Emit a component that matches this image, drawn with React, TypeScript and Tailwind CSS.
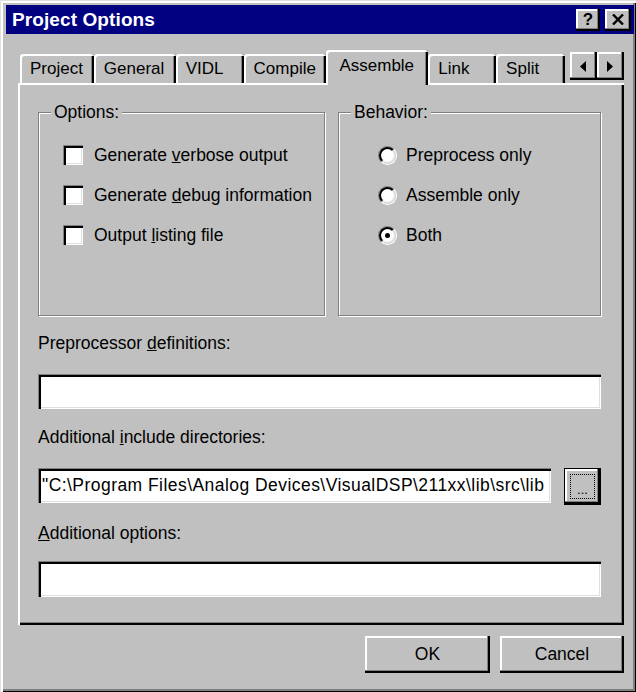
import React from "react";

// classic 3D bevels
const raised =
  "bg-[#c0c0c0] shadow-[inset_-2px_-2px_#000,inset_-3px_-3px_#808080,inset_2px_2px_#fff]";
const sunken =
  "bg-white shadow-[inset_1px_1px_#808080,inset_3px_3px_#000,inset_-1px_-1px_#fff,inset_-2px_-2px_#dfdfdf]";

const tabs = [
  { label: "Project", w: "w-[74px]" },
  { label: "General", w: "w-[82px]" },
  { label: "VIDL", w: "w-[68px]" },
  { label: "Compile", w: "w-[83px]" },
  { label: "Assemble", w: "w-[102px]", active: true },
  { label: "Link", w: "w-[68px]" },
  { label: "Split", w: "w-[69px]" },
];

function Checkbox({ children }: { children: React.ReactNode }) {
  return (
    <div className="flex items-center h-[20px] gap-[11px]">
      <span className={`w-[20px] h-[20px] shrink-0 ${sunken}`} />
      <span>{children}</span>
    </div>
  );
}

function Radio({ checked, children }: { checked?: boolean; children: React.ReactNode }) {
  return (
    <div className="flex items-center h-[20px] gap-[9px]">
      <span className="w-[19px] h-[19px] shrink-0 rounded-full border border-t-[#808080] border-l-[#808080] border-r-white border-b-white">
        <span className="w-full h-full rounded-full border-2 border-t-black border-l-black border-r-[#dfdfdf] border-b-[#dfdfdf] bg-white flex items-center justify-center">
          {checked && <span className="w-[5px] h-[5px] rounded-full bg-black" />}
        </span>
      </span>
      <span>{children}</span>
    </div>
  );
}

function GroupBox({
  title,
  className,
  children,
}: {
  title: string;
  className: string;
  children: React.ReactNode;
}) {
  return (
    <div
      className={`relative h-[204px] border border-[#808080] shadow-[1px_1px_0_#fff,inset_1px_1px_0_#fff] ${className}`}
    >
      <span className="absolute -top-[11px] left-[12px] bg-[#c0c0c0] px-[3px] leading-[20px]">
        {title}
      </span>
      {children}
    </div>
  );
}

export default function App() {
  return (
    <div className="w-[636px] h-[692px] bg-[#c0c0c0] pt-[5px] pl-[6px] pr-[2px] text-black font-['Liberation_Sans',Arial,sans-serif] text-[17.5px] shadow-[inset_1px_1px_#dfdfdf,inset_3px_3px_#fff,inset_-1px_-1px_#000,inset_-3px_-3px_#808080] select-none">
      {/* Title bar */}
      <div className="h-[29px] bg-[#000080] flex items-center justify-between pl-[6px] pr-[3px]">
        <span className="text-white font-bold text-[19px] leading-none tracking-[0.1px]">
          Project Options
        </span>
        <div className="flex gap-[5px]">
          <div className={`w-[24px] h-[22px] flex items-center justify-center font-bold text-[17px] leading-none ${raised}`}>
            ?
          </div>
          <div className={`w-[26px] h-[22px] flex items-center justify-center ${raised}`}>
            <svg width="12" height="11" viewBox="0 0 12 11">
              <path d="M1 0.5 L11 10.5 M11 0.5 L1 10.5" stroke="#000" strokeWidth="2.4" />
            </svg>
          </div>
        </div>
      </div>

      <div className="pl-[12px] pr-[10px] pt-[16px]">
        {/* Tab strip */}
        <div className="h-[33px] flex items-end pl-[2px]">
          {tabs.map((t) =>
            t.active ? (
              <div
                key={t.label}
                className={`${t.w} h-[35px] -mb-[2px] relative z-10 bg-[#c0c0c0] rounded-t-[3px] pl-[13px] pt-[4px] leading-[24px] text-[17px] shadow-[inset_2px_2px_#fff,inset_-2px_0_#000,inset_-3px_0_#808080]`}
              >
                {t.label}
              </div>
            ) : (
              <div
                key={t.label}
                className={`${t.w} h-[29px] rounded-t-[3px] pl-[10px] pt-[3px] leading-[24px] text-[17px] shadow-[inset_2px_2px_#fff,inset_-2px_0_#000,inset_-3px_0_#808080]`}
              >
                {t.label}
              </div>
            )
          )}
          <div className="self-start mt-[2px] ml-[5px] flex">
            <div className={`w-[27px] h-[28px] flex items-center justify-center ${raised}`}>
              <svg width="6" height="11" viewBox="0 0 6 11">
                <path d="M6 0 L0 5.5 L6 11 Z" fill="#000" />
              </svg>
            </div>
            <div className={`w-[27px] h-[28px] flex items-center justify-center ${raised}`}>
              <svg width="6" height="11" viewBox="0 0 6 11">
                <path d="M0 0 L6 5.5 L0 11 Z" fill="#000" />
              </svg>
            </div>
          </div>
        </div>

        {/* Tab page */}
        <div className="w-[606px] h-[542px] pl-[20px] pr-[23px] pt-[29px] shadow-[inset_2px_2px_#fff,inset_-2px_-2px_#000,inset_-3px_-3px_#808080]">
          <div className="flex gap-[13px]">
            <GroupBox title="Options:" className="w-[287px]">
              <div className="pt-[32px] pl-[24px] flex flex-col gap-[20px]">
                <Checkbox>
                  Generate <span className="underline">v</span>erbose output
                </Checkbox>
                <Checkbox>
                  Generate <span className="underline">d</span>ebug information
                </Checkbox>
                <Checkbox>
                  Output <span className="underline">l</span>isting file
                </Checkbox>
              </div>
            </GroupBox>
            <GroupBox title="Behavior:" className="w-[263px]">
              <div className="pt-[32px] pl-[39px] flex flex-col gap-[20px]">
                <Radio>Preprocess only</Radio>
                <Radio>Assemble only</Radio>
                <Radio checked>Both</Radio>
              </div>
            </GroupBox>
          </div>

          <div className="mt-[17px] leading-[20px]">
            Preprocessor <span className="underline">d</span>efinitions:
          </div>
          <div className={`mt-[21px] h-[35px] ${sunken}`} />

          <div className="mt-[18px] leading-[20px]">
            Additional <span className="underline">i</span>nclude directories:
          </div>
          <div className="mt-[21px] flex items-start gap-[13px]">
            <div className={`flex-1 h-[35px] overflow-hidden whitespace-nowrap pl-[4px] leading-[35px] tracking-[0.45px] ${sunken}`}>
              "C:\Program Files\Analog Devices\VisualDSP\211xx\lib\src\lib
            </div>
            <div className="w-[37px] h-[37px] border border-black">
              <div className={`w-full h-full p-[5px] ${raised}`}>
                <div className="w-full h-full border border-dotted border-black flex items-end justify-center text-[13px] leading-[14px] pb-[1px]">
                  ...
                </div>
              </div>
            </div>
          </div>

          <div className="mt-[18px] leading-[20px]">
            <span className="underline">A</span>dditional options:
          </div>
          <div className={`mt-[18px] h-[36px] ${sunken}`} />
        </div>

        {/* Dialog buttons */}
        <div className="mt-[11px] flex justify-end gap-[10px]">
          <div className={`w-[125px] h-[37px] flex items-center justify-center ${raised}`}>OK</div>
          <div className={`w-[124px] h-[37px] flex items-center justify-center ${raised}`}>Cancel</div>
        </div>
      </div>
    </div>
  );
}
